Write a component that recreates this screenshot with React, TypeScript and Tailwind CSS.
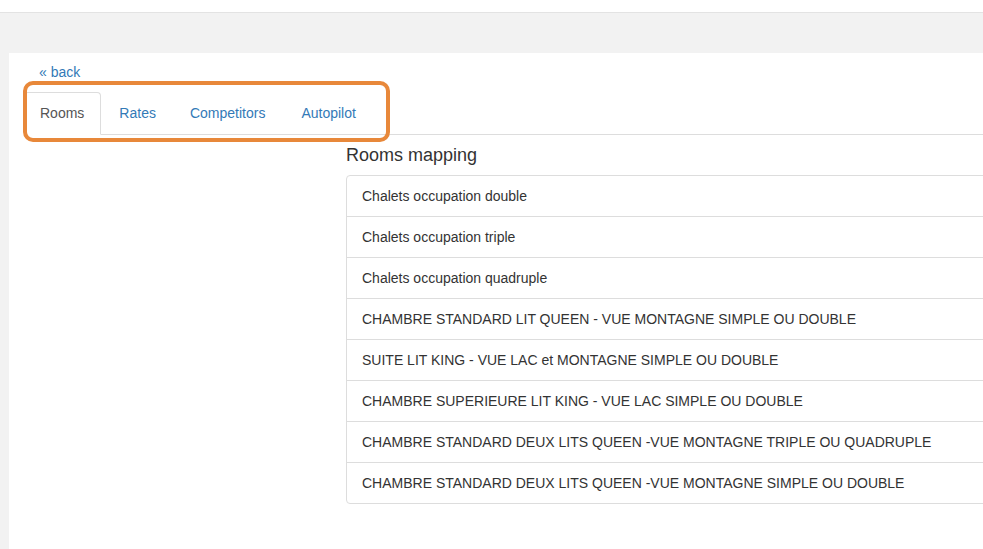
import React from "react";

const rooms = [
  "Chalets occupation double",
  "Chalets occupation triple",
  "Chalets occupation quadruple",
  "CHAMBRE STANDARD LIT QUEEN - VUE MONTAGNE SIMPLE OU DOUBLE",
  "SUITE LIT KING - VUE LAC et MONTAGNE SIMPLE OU DOUBLE",
  "CHAMBRE SUPERIEURE LIT KING - VUE LAC SIMPLE OU DOUBLE",
  "CHAMBRE STANDARD DEUX LITS QUEEN -VUE MONTAGNE TRIPLE OU QUADRUPLE",
  "CHAMBRE STANDARD DEUX LITS QUEEN -VUE MONTAGNE SIMPLE OU DOUBLE",
];

export default function App() {
  return (
    <div
      className="relative w-[983px] h-[549px] overflow-hidden bg-[#f2f2f2] text-[14px] leading-[20px] text-[#333]"
      style={{ fontFamily: '"Liberation Sans", Arial, sans-serif' }}
    >
      <div className="h-[13px] bg-white border-b border-[#e3e3e3]" />
      <div className="mt-[40px] ml-[9px] w-[1200px] h-[600px] bg-white pl-[15px] pt-[9px]">
        <a className="ml-[15px] block w-fit text-[#337ab7]" href="#">
          « back
        </a>
        <div className="mt-[10px] flex border-b border-[#ddd]">
          <div className="-mb-px rounded-t-[4px] border border-[#ddd] border-b-transparent bg-white pl-[15px] pr-[16px] py-[10px] text-[#555]">
            Rooms
          </div>
          <div className="ml-[2px] border border-transparent px-[15px] py-[10px] text-[#337ab7]">Rates</div>
          <div className="ml-[2px] border border-transparent px-[15px] py-[10px] text-[#337ab7]">Competitors</div>
          <div className="ml-[4px] border border-transparent px-[15px] py-[10px] text-[#337ab7]">Autopilot</div>
        </div>
        <div className="flex">
          <div className="w-[322px] shrink-0" />
          <div className="flex-1">
            <h4 className="mt-[10px] mb-[10px] text-[18px] leading-[20px] font-normal text-[#333]">Rooms mapping</h4>
            <div className="rounded-[4px] border border-[#ddd]">
              {rooms.map((r, i) => (
                <div
                  key={i}
                  className={`px-[15px] py-[10px] ${i > 0 ? "border-t border-[#ddd]" : ""}`}
                >
                  {r}
                </div>
              ))}
            </div>
          </div>
        </div>
      </div>
      <div className="absolute left-[23px] top-[81px] w-[367px] h-[61px] rounded-[10px] border-[4px] border-[#e8883a]" />
    </div>
  );
}
